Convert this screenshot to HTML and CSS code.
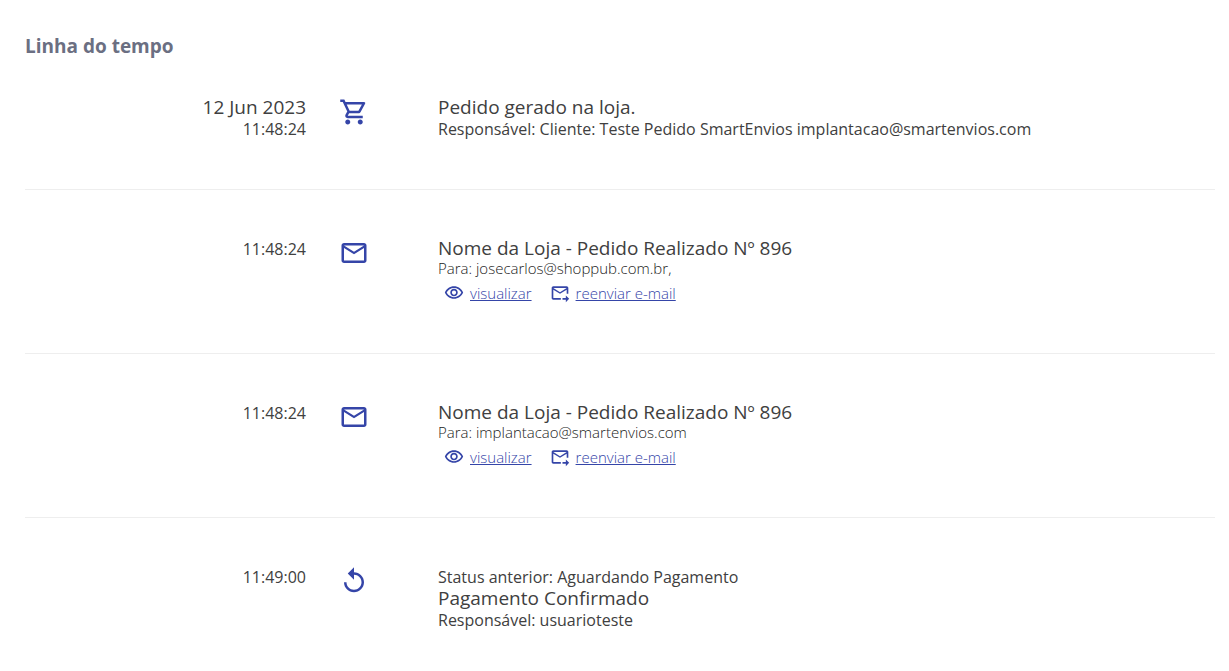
FILE: index.html
```html
<!DOCTYPE html>
<html lang="pt-BR">
<head>
    <meta charset="utf-8">
    <meta name="viewport" content="width=device-width, initial-scale=1">
    <title>Linha do tempo</title>
    <link rel="stylesheet" href="styles.css">
</head>
<body>
    <svg class="sprite" aria-hidden="true">
        <symbol id="icon-cart" viewBox="0 0 24 24">
            <path d="M15.55 13c.75 0 1.41-.41 1.75-1.03l3.58-6.49A.996.996 0 0 0 20.01 4H5.21l-.94-2H1v2h2l3.6 7.59-1.35 2.44C4.52 15.37 5.48 17 7 17h12v-2H7l1.1-2h7.45zM6.16 6h12.15l-2.76 5H8.53L6.16 6zM7 18c-1.1 0-1.99.9-1.99 2S5.9 22 7 22s2-.9 2-2-.9-2-2-2zm10 0c-1.1 0-1.99.9-1.99 2s.89 2 1.99 2 2-.9 2-2-.9-2-2-2z"/>
        </symbol>
        <symbol id="icon-mail" viewBox="0 0 24 24">
            <path d="M4 20q-.825 0-1.412-.587Q2 18.825 2 18V6q0-.825.588-1.412Q3.175 4 4 4h16q.825 0 1.413.588Q22 5.175 22 6v12q0 .825-.587 1.413Q20.825 20 20 20zm8-7L4 8v10h16V8zm0-2 8-5H4zM4 8V6v12z"/>
        </symbol>
        <symbol id="icon-eye" viewBox="0 0 24 24">
            <path d="M12 6c3.79 0 7.17 2.13 8.82 5.5C19.17 14.87 15.79 17 12 17s-7.17-2.13-8.82-5.5C4.83 8.13 8.21 6 12 6m0-2C7 4 2.73 7.11 1 11.5 2.73 15.89 7 19 12 19s9.27-3.11 11-7.5C21.27 7.11 17 4 12 4zm0 5c1.38 0 2.5 1.12 2.5 2.5S13.38 14 12 14s-2.5-1.12-2.5-2.5S10.62 9 12 9m0-2c-2.48 0-4.5 2.02-4.5 4.5S9.52 16 12 16s4.5-2.02 4.5-4.5S14.48 7 12 7z"/>
        </symbol>
        <symbol id="icon-forward" viewBox="0 0 24 24">
            <path d="M20 4H4c-1.100 0-2 .9-2 2v12c0 1.100.9 2 2 2h9v-2H4V8l8 5 8-5v5h2V6c0-1.100-.9-2-2-2zm-8 7L4 6h16l-8 5zm7 4 4 4-4 4v-3h-4v-2h4v-3z"/>
        </symbol>
        <symbol id="icon-replay" viewBox="0 0 24 24">
            <path d="M12 5V1L7 6l5 5V7c3.310 0 6 2.690 6 6s-2.690 6-6 6-6-2.690-6-6H4c0 4.420 3.580 8 8 8s8-3.580 8-8-3.580-8-8-8z"/>
        </symbol>
    </svg>

    <main class="timeline">
        <h1>Linha do tempo</h1>

        <ol class="events">
            <li class="event">
                <div class="when">
                    <div class="date">12 Jun 2023</div>
                    <time>11:48:24</time>
                </div>
                <svg class="icon"><use href="#icon-cart"/></svg>
                <div class="info">
                    <h2>Pedido gerado na loja.</h2>
                    <p>Responsável: Cliente: Teste Pedido SmartEnvios implantacao@smartenvios.com</p>
                </div>
            </li>

            <li class="event">
                <div class="when">
                    <time>11:48:24</time>
                </div>
                <svg class="icon"><use href="#icon-mail"/></svg>
                <div class="info">
                    <h2>Nome da Loja - Pedido Realizado Nº 896</h2>
                    <p class="recipient">Para: josecarlos@shoppub.com.br,</p>
                    <div class="actions">
                        <a href="#"><svg><use href="#icon-eye"/></svg><span>visualizar</span></a>
                        <a href="#"><svg><use href="#icon-forward"/></svg><span>reenviar e-mail</span></a>
                    </div>
                </div>
            </li>

            <li class="event">
                <div class="when">
                    <time>11:48:24</time>
                </div>
                <svg class="icon"><use href="#icon-mail"/></svg>
                <div class="info">
                    <h2>Nome da Loja - Pedido Realizado Nº 896</h2>
                    <p class="recipient">Para: implantacao@smartenvios.com</p>
                    <div class="actions">
                        <a href="#"><svg><use href="#icon-eye"/></svg><span>visualizar</span></a>
                        <a href="#"><svg><use href="#icon-forward"/></svg><span>reenviar e-mail</span></a>
                    </div>
                </div>
            </li>

            <li class="event">
                <div class="when">
                    <time>11:49:00</time>
                </div>
                <svg class="icon"><use href="#icon-replay"/></svg>
                <div class="info">
                    <p>Status anterior: Aguardando Pagamento</p>
                    <h2>Pagamento Confirmado</h2>
                    <p>Responsável: usuarioteste</p>
                </div>
            </li>
        </ol>
    </main>
</body>
</html>
```
FILE: styles.css
```css
* {
    box-sizing: border-box;
}
body {
    margin: 0;
    background: #fff;
    color: #404040;
    font-family: "Open Sans", sans-serif;
    font-size: 16px;
    line-height: 22px;
}
.sprite {
    display: none;
}
.timeline {
    padding: 35px 14px 0 25px;
}
h1 {
    margin: 0;
    color: #6b6f82;
    font-size: 19px;
    font-weight: 700;
    line-height: 22px;
}
.events {
    margin: 0;
    padding: 0;
    list-style: none;
}
.event {
    display: grid;
    grid-template-columns: 281px 30px 1fr;
    column-gap: 33px;
    align-items: start;
    padding: 48px 0 49px;
    border-bottom: 1px solid #eee;
}
.event:first-child {
    padding-top: 40px;
}
.event:last-child {
    padding-bottom: 36px;
    border-bottom: none;
}
.when {
    text-align: right;
}
time {
    display: block;
}
h2,
.date {
    margin: 0;
    font-size: 19px;
    font-weight: 400;
    line-height: 21px;
}
p {
    margin: 0;
}
.icon {
    width: 30px;
    height: 30px;
    fill: #3545a8;
}
.info {
    padding-left: 36px;
}
.recipient {
    color: #222;
    font-size: 15px;
    font-weight: 300;
    line-height: 18px;
}
.actions {
    display: flex;
    gap: 18px;
    padding: 5px 0 0 6px;
}
.actions a {
    display: flex;
    align-items: center;
    gap: 6px;
    color: #3545a8;
    font-size: 15px;
    font-weight: 300;
}
.actions svg {
    width: 20px;
    height: 20px;
    fill: #3545a8;
}
```
